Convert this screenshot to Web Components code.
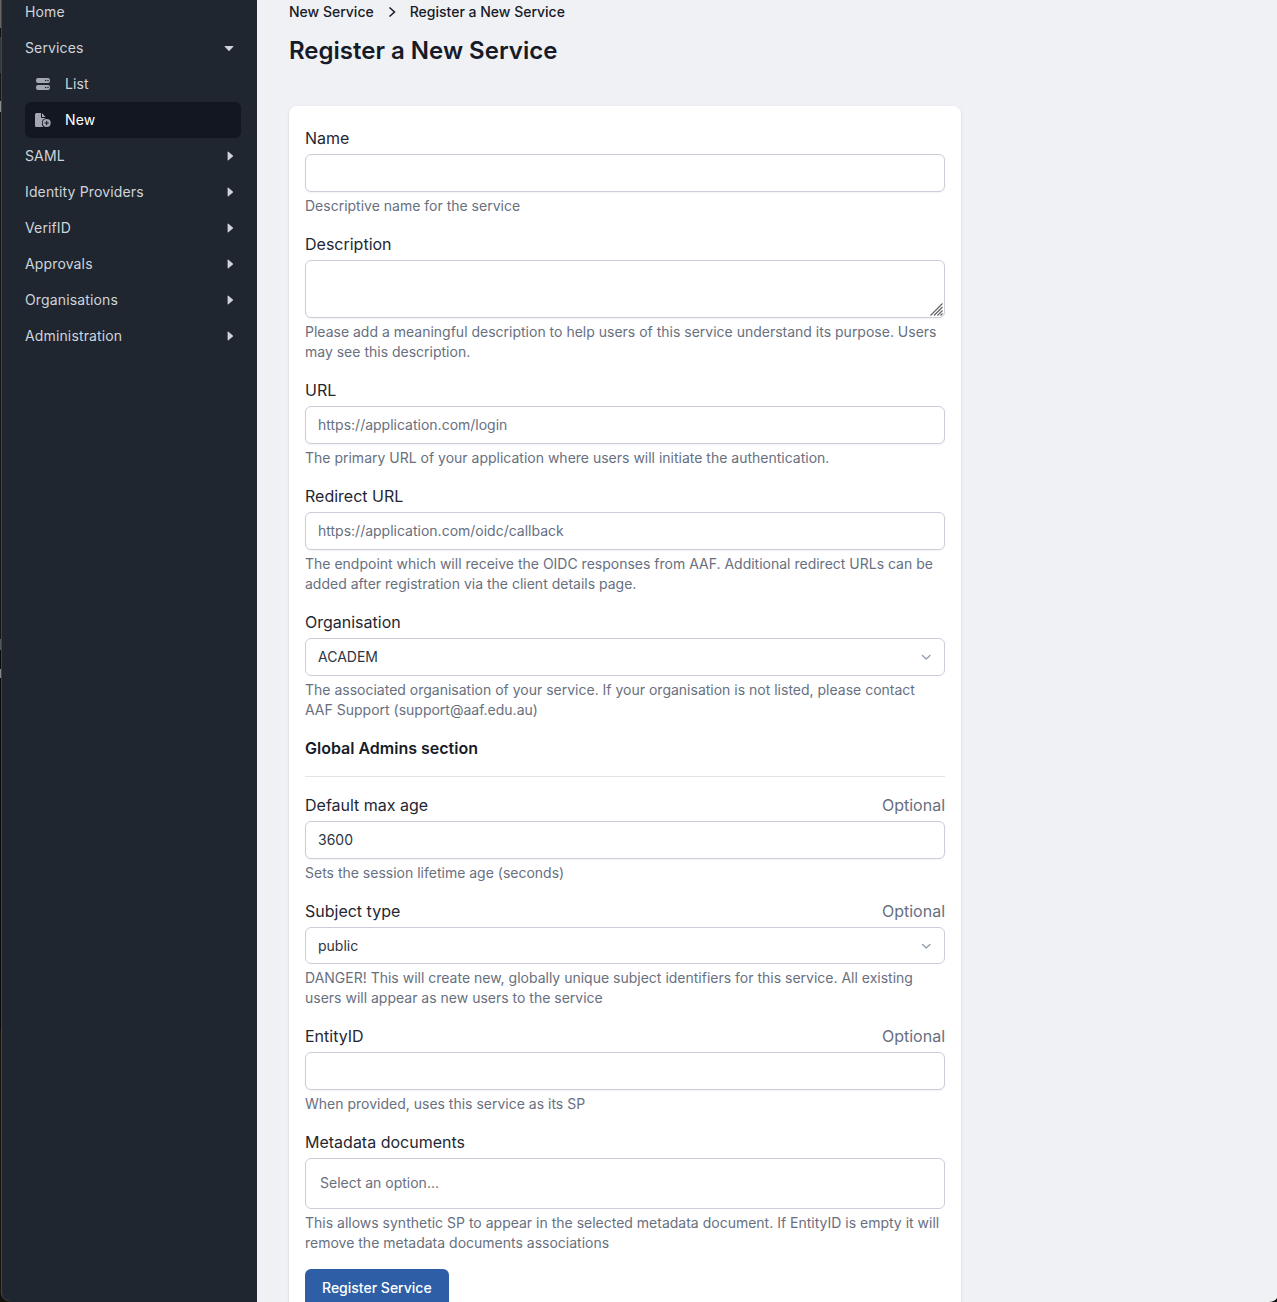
<!DOCTYPE html>
<html lang="en">
<head>
<meta charset="utf-8">
<title>Register a New Service</title>
<style>
html,body{margin:0;height:100%;overflow:hidden}
body{font-family:Inter,"Liberation Sans",sans-serif;font-size:14px;line-height:20px;color:#1f2733;background:#f0f1f5}
</style>
</head>
<body>
<app-shell>
  <side-nav slot="nav">
    <nav-item>Home</nav-item>
    <nav-item arrow="down">Services</nav-item>
    <nav-item icon="list">List</nav-item>
    <nav-item icon="new" active>New</nav-item>
    <nav-item arrow="right">SAML</nav-item>
    <nav-item arrow="right">Identity Providers</nav-item>
    <nav-item arrow="right">VerifID</nav-item>
    <nav-item arrow="right">Approvals</nav-item>
    <nav-item arrow="right">Organisations</nav-item>
    <nav-item arrow="right">Administration</nav-item>
  </side-nav>
  <page-header><span slot="parent">New Service</span><span slot="current">Register a New Service</span><span slot="title">Register a New Service</span></page-header>
  <form-card>
    <form-field><span slot="label">Name</span><text-box></text-box><span slot="help">Descriptive name for the service</span></form-field>
    <form-field><span slot="label">Description</span><text-box kind="area"></text-box><span slot="help">Please add a meaningful description to help users of this service understand its purpose. Users<br>may see this description.</span></form-field>
    <form-field><span slot="label">URL</span><text-box placeholder>https://application.com/login</text-box><span slot="help">The primary URL of your application where users will initiate the authentication.</span></form-field>
    <form-field><span slot="label">Redirect URL</span><text-box placeholder>https://application.com/oidc/callback</text-box><span slot="help">The endpoint which will receive the OIDC responses from AAF. Additional redirect URLs can be<br>added after registration via the client details page.</span></form-field>
    <form-field><span slot="label">Organisation</span><text-box kind="select">ACADEM</text-box><span slot="help">The associated organisation of your service. If your organisation is not listed, please contact<br>AAF Support (support@aaf.edu.au)</span></form-field>
    <section-title>Global Admins section</section-title>
    <form-field><span slot="label">Default max age</span><span slot="hint">Optional</span><text-box>3600</text-box><span slot="help">Sets the session lifetime age (seconds)</span></form-field>
    <form-field><span slot="label">Subject type</span><span slot="hint">Optional</span><text-box kind="select" style="height:37px">public</text-box><span slot="help">DANGER! This will create new, globally unique subject identifiers for this service. All existing<br>users will appear as new users to the service</span></form-field>
    <form-field><span slot="label">EntityID</span><span slot="hint">Optional</span><text-box></text-box><span slot="help">When provided, uses this service as its SP</span></form-field>
    <form-field><span slot="label">Metadata documents</span><text-box kind="multi" placeholder>Select an option...</text-box><span slot="help">This allows synthetic SP to appear in the selected metadata document. If EntityID is empty it will<br>remove the metadata documents associations</span></form-field>
    <primary-button>Register Service</primary-button>
  </form-card>
</app-shell>
<script>
function define(name, html, setup) {
  customElements.define(name, class extends HTMLElement {
    constructor() {
      super();
      const t = document.createElement('template');
      t.innerHTML = html;
      this.attachShadow({mode: 'open'}).append(t.content.cloneNode(true));
    }
    connectedCallback() { if (setup) setup(this, this.shadowRoot); }
  });
}

define('app-shell', `<style>
:host{display:flex;height:100vh;overflow:hidden;background:#f0f1f5;position:relative}
.edge{flex:0 0 1px;background:linear-gradient(#66645f 0 28px,#111 28px 37px,#35363a 37px 73px,#17171a 73px 101px,#8a8b8d 101px 112px,#151515 112px 639px,#55565a 639px 650px,#08090b 650px 669px,#85868a 669px 678px,#090909 678px 1030px,#18120b 1030px)}
main{flex:1;padding-left:32px;min-width:0}
.corner{position:absolute;bottom:0}
.l{left:0}.r{right:0}
</style><div class="edge"></div><slot name="nav"></slot><main><slot></slot></main>
<svg class="corner l" width="10" height="10"><path d="M0 0H1C1.5 6 4 9 10 9V10H0Z" fill="#15120b"/><path d="M1.500 0C2 5.500 4.500 8.500 10 9.200" fill="none" stroke="#46505b" stroke-width=".7"/></svg>
<svg class="corner r" width="8" height="4"><path d="M8 0V4H0Q6 3.500 8 0Z" fill="#111"/></svg>`);

define('side-nav', `<style>
:host{display:flex;flex-direction:column;flex:0 0 256px;box-sizing:border-box;margin-top:-6px;padding:0 16px 0 23px;background:#1f2630;border-left:1px solid #3d454e}
</style><slot></slot>`);

const icons = {
  list: '<svg width="16" height="16" viewBox="0 0 16 16"><path fill="#a4a7b1" fill-rule="evenodd" d="M3 2H13A2 2 0 0 1 15 4V5A2 2 0 0 1 13 7H3A2 2 0 0 1 1 5V4A2 2 0 0 1 3 2ZM10.700 3.700A.8.8 0 1 0 10.700 5.300A.8.8 0 1 0 10.700 3.700M13 3.700A.8.8 0 1 0 13 5.300A.8.8 0 1 0 13 3.700M3 9H13A2 2 0 0 1 15 11V12A2 2 0 0 1 13 14H3A2 2 0 0 1 1 12V11A2 2 0 0 1 3 9ZM10.700 10.700A.8.8 0 1 0 10.700 12.300A.8.8 0 1 0 10.700 10.700M13 10.700A.8.8 0 1 0 13 12.300A.8.8 0 1 0 13 10.700"/></svg>',
  new: '<svg width="17" height="16" viewBox="0 0 17 16"><path fill="#a4a7b1" d="M1.500 1H6V5A1 1 0 0 0 7 6H10.500V6.700A4.900 4.900 0 0 0 8.400 15H1.500A1.500 1.500 0 0 1 0 13.500V2.500A1.500 1.500 0 0 1 1.500 1ZM7 1L10.500 5H7Z"/><circle cx="11.700" cy="11" r="4.800" fill="#131722"/><circle cx="11.700" cy="11" r="4" fill="#a4a7b1"/><path d="M11.700 8.900V13.100M9.600 11H13.800" stroke="#131722" stroke-width="1"/></svg>'
};
define('nav-item', `<style>
:host{display:flex;align-items:center;height:36px;color:#d0d4da;letter-spacing:.14px;box-sizing:border-box;flex:none}
:host([icon]){padding-left:10px;border-radius:6px}
:host([active]){background:#131722;color:#fff}
.icon{display:none}
:host([icon]) .icon{display:flex;width:30px}
.text{flex:1}
.arrow{display:flex;width:10px;margin-right:6px}
</style><span class="icon"></span><span class="text"><slot></slot></span><span class="arrow"></span>`, (el, root) => {
  if (el.getAttribute('icon')) root.querySelector('.icon').innerHTML = icons[el.getAttribute('icon')];
  const a = el.getAttribute('arrow');
  if (a) root.querySelector('.arrow').innerHTML = a === 'down'
    ? '<svg width="10" height="10" style="margin-left:-1.500px"><path d="M1 3H9Q9.700 3.200 9.200 3.800L5.500 7.700Q5 8.200 4.500 7.700L.8 3.800Q.3 3.200 1 3Z" fill="#d0d4da"/></svg>'
    : '<svg width="10" height="10"><path d="M2.600 1.200Q2.600 .3 3.400 .8L7.800 4.500Q8.300 5 7.800 5.500L3.400 9.200Q2.600 9.700 2.600 8.800Z" fill="#d0d4da"/></svg>';
});

define('page-header', `<style>
:host{display:block;height:104px;padding-top:2px;color:#171b28}
nav{display:flex;align-items:center;font-weight:500;white-space:nowrap}
svg{margin:0 12px}
h1{margin:13px 0 0;font-size:24px;line-height:32px;font-weight:600;white-space:nowrap}
</style><nav><slot name="parent"></slot><svg width="12" height="12" viewBox="0 0 12 12"><path d="M3.500 1.500L8.500 6L3.500 10.500" fill="none" stroke="#171b28" stroke-width="1.500"/></svg><slot name="current"></slot></nav><h1><slot name="title"></slot></h1>`);

define('form-card', `<style>
:host{display:flex;flex-direction:column;gap:16px;width:672px;box-sizing:border-box;padding:20px 16px;background:#fff;border-radius:8px;box-shadow:0 1px 3px rgba(0,0,0,.1),0 1px 2px rgba(0,0,0,.06)}
</style><slot></slot>`);

define('form-field', `<style>
:host{display:flex;flex-direction:column;gap:4px}
.top{display:flex;justify-content:space-between;font-size:16px;line-height:24px;color:#1f2733}
.hint,.help{color:#687080}
.help{white-space:nowrap}
</style><div class="top"><slot name="label"></slot><span class="hint"><slot name="hint"></slot></span></div><slot></slot><div class="help"><slot name="help"></slot></div>`);

define('text-box', `<style>
:host{display:flex;align-items:center;position:relative;box-sizing:border-box;height:38px;padding:0 12px;border:1px solid #cbced8;border-radius:6px;background:#fff;color:#2d3542;box-shadow:0 1px 2px rgba(0,0,0,.05)}
:host([placeholder]){color:#687080}
:host([kind=area]){height:58px}
:host([kind=multi]){height:51px;padding:0 14px 1px;box-shadow:none}
:host([kind=select]){box-shadow:none}
.text{flex:1}
.grip{position:absolute;right:1px;bottom:1px}
</style><span class="text"><slot></slot></span><span class="mark"></span>`, (el, root) => {
  const k = el.getAttribute('kind'), m = root.querySelector('.mark');
  if (k === 'select') m.innerHTML = '<svg width="12" height="12" viewBox="0 0 12 12" style="display:block"><path d="M2.500 4.500L6.200 8L10 4.500" fill="none" stroke="#929eaf" stroke-width="1.400" stroke-linecap="round" stroke-linejoin="round"/></svg>';
  if (k === 'area') m.innerHTML = '<svg class="grip" width="13" height="13" viewBox="0 0 13 13"><path d="M.5 12.500L12.500 .5M4 12.500L12.500 4M7.500 12.500L12.500 7.500M10.500 12.500L12.500 10.500" stroke="#606060" stroke-width="1.100"/></svg>';
});

define('section-title', `<style>
:host{display:block;font-size:16px;line-height:24px;font-weight:600;color:#171b28;padding-bottom:16px;border-bottom:1px solid #e2e4e9}
</style><slot></slot>`);

define('primary-button', `<style>
:host{display:flex;align-items:center;align-self:flex-start;box-sizing:border-box;width:144px;height:38px;padding:0 17px;border-radius:6px;background:#2e5fa6;color:#fff;font-weight:500;white-space:nowrap}
</style><slot></slot>`);
</script>
</body>
</html>
